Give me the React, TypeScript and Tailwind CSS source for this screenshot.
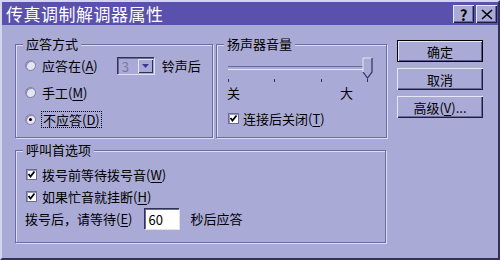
import React from "react";

const U = ({ c }: { c: string }) => <span className="underline underline-offset-2">{c}</span>;

function Radio({ checked }: { checked?: boolean }) {
  return (
    <span className="relative inline-block w-[11px] h-[11px] rounded-full bg-[#e6e6f2] border border-[#7c7ca8] shadow-[inset_1px_1px_0_#8a8ab0] shrink-0">
      {checked && <span className="absolute left-[3px] top-[3px] w-[3px] h-[3px] rounded-full bg-black" />}
    </span>
  );
}

function Check() {
  return (
    <span className="relative inline-flex items-center justify-center w-[11px] h-[11px] bg-white border border-[#6a6a98] shadow-[inset_1px_1px_0_#9a9ac0] shrink-0">
      <svg width="9" height="9" viewBox="0 0 9 9">
        <path d="M1.5 4 L3.5 6.5 L7.5 1.5" stroke="black" strokeWidth="1.8" fill="none" />
      </svg>
    </span>
  );
}

function Group({ title, className, children }: { title: string; className: string; children?: React.ReactNode }) {
  return (
    <div className={"relative border border-[#6c6ca0] shadow-[inset_1px_1px_0_#dcdcf4,1px_1px_0_#dcdcf4] " + className}>
      <span className="absolute -top-[10px] left-[7px] px-[3px] bg-[#aaaad6] leading-[18px]">{title}</span>
      {children}
    </div>
  );
}

function Btn({ children, def }: { children: React.ReactNode; def?: boolean }) {
  return (
    <div
      className={
        "w-[86px] h-[22px] flex items-center justify-center leading-none " +
        (def
          ? "border border-black shadow-[inset_1px_1px_0_#e6e6f6,inset_-1px_-1px_0_#5a5a8a]"
          : "shadow-[inset_1px_1px_0_#e6e6f6,inset_-1px_-1px_0_#1e1e40,inset_-2px_-2px_0_#6a6a9a]")
      }
    >
      {children}
    </div>
  );
}

function TitleBtn({ children }: { children: React.ReactNode }) {
  return (
    <div className="w-[21px] h-[18px] bg-[#aaaad6] flex items-center justify-center text-black font-bold text-[15px] leading-none shadow-[inset_1px_1px_0_#e6e6f6,inset_-1px_-1px_0_#1e1e40,inset_-2px_-2px_0_#6a6a9a]">
      {children}
    </div>
  );
}

export default function App() {
  return (
    <div className="w-[500px] h-[260px] bg-[#aaaad6] border-l-2 border-t-2 border-l-[#d4d4ee] border-t-[#d4d4ee] border-r-2 border-b-2 border-r-[#30305a] border-b-[#30305a] text-[13px] text-black font-['Noto_Sans_CJK_SC','Noto_Sans',sans-serif] flex flex-col overflow-hidden">
      <div className="h-[23px] bg-[#5a50ae] flex items-center justify-between pl-[4px] pr-[1px]">
        <span className="text-white text-[17px] leading-none tracking-[0.5px]">传真调制解调器属性</span>
        <div className="flex gap-[2px] mt-[1px]">
          <TitleBtn>?</TitleBtn>
          <TitleBtn>
            <svg width="12" height="11" viewBox="0 0 12 11">
              <path d="M1 1 L11 10 M11 1 L1 10" stroke="black" strokeWidth="1.6" />
            </svg>
          </TitleBtn>
        </div>
      </div>
      <div className="flex pl-[13px] pt-[19px]">
        <Group title="应答方式" className="w-[198px] h-[94px] flex flex-col pl-[9px] pt-[12px]">
          <div className="flex items-center h-[17px]">
            <Radio />
            <span className="ml-[6px] leading-none">应答在(<U c="A" />)</span>
            <div className="ml-[19px] w-[37px] h-[17px] bg-[#aaaad6] border-t border-l border-[#30305a] shadow-[inset_1px_1px_0_#6a6a9a,1px_1px_0_#e0e0f4] flex items-center justify-between">
              <span className="ml-[4px] text-[#7878a8] leading-none">3</span>
              <div className="w-[15px] h-[14px] mr-[1px] flex items-center justify-center shadow-[inset_1px_1px_0_#e6e6f6,inset_-1px_-1px_0_#30305a]">
                <svg width="7" height="4" viewBox="0 0 7 4"><path d="M0 0 H7 L3.5 4 Z" fill="#3a3a90" /></svg>
              </div>
            </div>
            <span className="ml-[8px] leading-none">铃声后</span>
          </div>
          <div className="flex items-center h-[17px] mt-[10px]">
            <Radio />
            <span className="ml-[6px] leading-none">手工(<U c="M" />)</span>
          </div>
          <div className="flex items-center h-[17px] mt-[10px]">
            <Radio checked />
            <span className="ml-[5px] px-[1px] py-[1px] leading-none border border-dotted border-black">不应答(<U c="D" />)</span>
          </div>
        </Group>
        <Group title="扬声器音量" className="ml-[3px] w-[171px] h-[94px] flex flex-col pl-[11px] pt-[12px]">
          <div className="relative w-[142px] h-[22px]">
            <div className="absolute left-0 top-[9px] w-[139px] h-[3px] border-t border-[#6a6a9a] bg-[#aaaad6] shadow-[0_1px_0_#e6e6f6]" />
            <svg className="absolute left-[134px] top-0" width="11" height="23" viewBox="0 0 11 23">
              <path d="M1 1 H10 V15 L5.5 21 L1 15 Z" fill="#aaaad6" />
              <path d="M1 15 V1 H10" stroke="#e6e6f6" strokeWidth="1" fill="none" />
              <path d="M10 1 V15 L5.5 21 L1 15" stroke="#30305a" strokeWidth="1.2" fill="none" />
            </svg>
          </div>
          <div className="flex justify-between w-[140px] h-[3px]">
            <span className="w-[1px] h-[3px] bg-[#30305a]" />
            <span className="w-[1px] h-[3px] bg-[#30305a]" />
            <span className="w-[1px] h-[3px] bg-[#30305a]" />
            <span className="w-[1px] h-[3px] bg-[#30305a]" />
          </div>
          <div className="flex justify-between w-[126px] mt-[4px] leading-none -ml-[1px]">
            <span>关</span>
            <span>大</span>
          </div>
          <div className="flex items-center h-[16px] mt-[11px]">
            <Check />
            <span className="ml-[4px] leading-none">连接后关闭(<U c="T" />)</span>
          </div>
        </Group>
        <div className="ml-[10px] -mt-[4px] flex flex-col gap-[6px]">
          <Btn def>确定</Btn>
          <Btn>取消</Btn>
          <Btn>高级(<U c="V" />)...</Btn>
        </div>
      </div>
      <div className="pl-[13px] mt-[12px]">
        <Group title="呼叫首选项" className="w-[371px] h-[93px] flex flex-col pl-[10px] pt-[15px]">
          <div className="flex items-center h-[16px]">
            <Check />
            <span className="ml-[5px] leading-none">拨号前等待拨号音(<U c="W" />)</span>
          </div>
          <div className="flex items-center h-[16px] mt-[6px]">
            <Check />
            <span className="ml-[5px] leading-none">如果忙音就挂断(<U c="H" />)</span>
          </div>
          <div className="flex items-center h-[21px] mt-[4px]">
            <span className="leading-none -ml-[1px]">拨号后，请等待(<U c="E" />)</span>
            <div className="ml-[12px] w-[35px] h-[21px] bg-white border-t border-l border-[#30305a] shadow-[inset_1px_1px_0_#6a6a9a,1px_1px_0_#e0e0f4] flex items-center pl-[3px] leading-none">
              60
            </div>
            <span className="ml-[11px] leading-none">秒后应答</span>
          </div>
        </Group>
      </div>
    </div>
  );
}
